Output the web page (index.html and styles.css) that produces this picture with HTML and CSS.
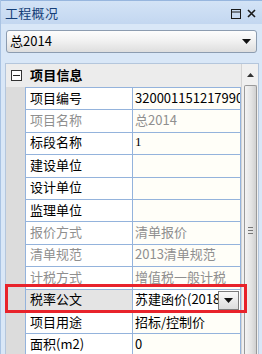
FILE: index.html
```html
<!DOCTYPE html>
<html>
<head>
<meta charset="utf-8">
<link rel="stylesheet" href="styles.css">
</head>
<body>
<div class="win">
  <div class="titlebar">
    <span class="title">工程概况</span>
    <span class="tools">
      <svg width="10" height="10" viewBox="0 0 10 10"><rect x="0.5" y="0.5" width="9" height="9" fill="none" stroke="#1a1a1a"/><line x1="0" y1="3" x2="10" y2="3" stroke="#1a1a1a"/></svg>
      <svg width="9" height="9" viewBox="0 0 9 9"><path d="M1 1L8 8M8 1L1 8" stroke="#1a1a1a" stroke-width="1.6"/></svg>
    </span>
  </div>
  <div class="combo">
    <span>总2014</span>
    <svg width="9" height="5" viewBox="0 0 9 5"><path d="M0 0H9L4.5 5Z" fill="#111"/></svg>
  </div>
  <div class="grid">
    <div class="list">
      <div class="group"><span class="toggle"></span><span class="gname">项目信息</span></div>
      <div class="row"><div class="gut"></div><div class="lab">项目编号</div><div class="val">320001151217990</div></div>
      <div class="row dis"><div class="gut"></div><div class="lab">项目名称</div><div class="val">总2014</div></div>
      <div class="row"><div class="gut"></div><div class="lab">标段名称</div><div class="val serif">1</div></div>
      <div class="row"><div class="gut"></div><div class="lab">建设单位</div><div class="val"></div></div>
      <div class="row"><div class="gut"></div><div class="lab">设计单位</div><div class="val"></div></div>
      <div class="row"><div class="gut"></div><div class="lab">监理单位</div><div class="val"></div></div>
      <div class="row dis"><div class="gut"></div><div class="lab">报价方式</div><div class="val">清单报价</div></div>
      <div class="row dis"><div class="gut"></div><div class="lab">清单规范</div><div class="val">2013清单规范</div></div>
      <div class="row dis"><div class="gut"></div><div class="lab">计税方式</div><div class="val">增值税一般计税</div></div>
      <div class="row sel"><div class="gut"></div><div class="lab">税率公文</div><div class="val edit"><span class="etext">苏建函价(2018)</span><span class="dbtn"><svg width="9" height="5" viewBox="0 0 9 5"><path d="M0 0H9L4.5 5Z" fill="#111"/></svg></span></div></div>
      <div class="row"><div class="gut"></div><div class="lab">项目用途</div><div class="val">招标/控制价</div></div>
      <div class="row"><div class="gut"></div><div class="lab">面积(m2)</div><div class="val">0</div></div>
    </div>
    <div class="scroll">
      <div class="up"><svg width="7" height="4" viewBox="0 0 7 4"><path d="M0 4H7L3.5 0Z" fill="#333"/></svg></div>
      <div class="thumb"><span class="grip"></span></div>
    </div>
  </div>
  <div class="mark"></div>
</div>
</body>
</html>
```

FILE: styles.css
```css
* { box-sizing: border-box; }
html, body { margin: 0; padding: 0; }
body {
  width: 262px;
  height: 354px;
  overflow: hidden;
  background: #d9e7f7;
  font-family: "Noto Sans CJK SC", "Microsoft YaHei", sans-serif;
  font-size: 13px;
  color: #000;
}
.win {
  position: relative;
  width: 262px;
  height: 354px;
  overflow: hidden;
  border-left: 1px solid #a9c3e3;
}
.titlebar {
  height: 24px;
  display: flex;
  align-items: center;
  justify-content: space-between;
  padding: 0 6px 0 4px;
  background: linear-gradient(#d3e3f6, #c3d7f0);
  border-top: 1px solid #97b6de;
}
.title {
  color: #153f78;
  font-size: 13px;
  line-height: 16px;
  letter-spacing: 0.3px;
}
.tools {
  display: flex;
  align-items: center;
  gap: 6px;
  padding-top: 2px;
}
.combo {
  margin: 6px 5px 0 5px;
  height: 23px;
  border: 1px solid #8c9cb0;
  border-radius: 3px;
  background: linear-gradient(#fdfdfd, #f2f2f2 45%, #dedede);
  display: flex;
  align-items: center;
  justify-content: space-between;
  padding: 0 5px 1px 3px;
  line-height: 16px;
}
.grid {
  margin: 10px 3px 0 4px;
  height: 291px;
  display: flex;
  border: 1px solid #b4c6dc;
  border-bottom: none;
  background: #fff;
  overflow: hidden;
}
.list {
  flex: 1;
  min-width: 0;
}
.group {
  height: 23px;
  display: flex;
  align-items: center;
  background: #ececec;
  padding-left: 5px;
}
.toggle {
  position: relative;
  width: 11px;
  height: 11px;
  border: 1px solid #333;
  background: #fff;
  margin-right: 8px;
}
.toggle::after {
  content: "";
  position: absolute;
  left: 1px;
  right: 1px;
  top: 4px;
  height: 1px;
  background: #222;
}
.gname {
  font-weight: bold;
  line-height: 16px;
  letter-spacing: 0.2px;
  padding-bottom: 1px;
}
.row {
  display: grid;
  grid-template-columns: 19px 107px 1fr;
  height: 22.4px;
}
.gut {
  background: #dcdcdc;
}
.lab, .val {
  border-top: 1px solid #94b3dc;
  border-left: 1px solid #94b3dc;
  display: flex;
  align-items: center;
  padding-left: 4px;
  padding-bottom: 2px;
  white-space: nowrap;
  overflow: hidden;
  line-height: 16px;
}
.lab { background: #fff; }
.val {
  background: #fffef8;
  border-right: 1px solid #94b3dc;
  padding-left: 2px;
}
.dis .lab, .dis .val { color: #8f8f8f; }
.serif { font-family: "Liberation Serif", serif; }
.sel .lab { background: #e4e4e4; }
.val.edit {
  background: #fff;
  padding-right: 1px;
  padding-bottom: 0;
}
.etext {
  flex: 1;
  overflow: hidden;
  min-width: 0;
  padding-bottom: 2px;
}
.dbtn {
  width: 21px;
  height: 19px;
  border: 1px solid #7d7d7d;
  background: linear-gradient(#fafafa, #dcdcdc);
  display: flex;
  align-items: center;
  justify-content: center;
}
.scroll {
  width: 17px;
  background: #f0f0f0;
  border-left: 1px solid #d4d4d4;
  display: flex;
  flex-direction: column;
  align-items: center;
}
.up {
  height: 21px;
  display: flex;
  align-items: center;
  justify-content: center;
}
.thumb {
  width: 13px;
  flex: 1;
  border: 1px solid #9a9a9a;
  border-bottom: none;
  border-radius: 2px 2px 0 0;
  background: linear-gradient(90deg, #f4f4f4, #e2e2e2 60%, #d0d0d0);
  display: flex;
  justify-content: center;
  padding-top: 141px;
}
.grip {
  width: 5px;
  height: 7px;
  border-top: 1px solid #777;
  border-bottom: 1px solid #777;
  position: relative;
}
.grip::after {
  content: "";
  position: absolute;
  left: 0;
  right: 0;
  top: 2px;
  height: 1px;
  background: #777;
}
.mark {
  position: absolute;
  left: 4px;
  top: 284px;
  width: 242px;
  height: 29px;
  border: 3px solid #e8232b;
}
```
